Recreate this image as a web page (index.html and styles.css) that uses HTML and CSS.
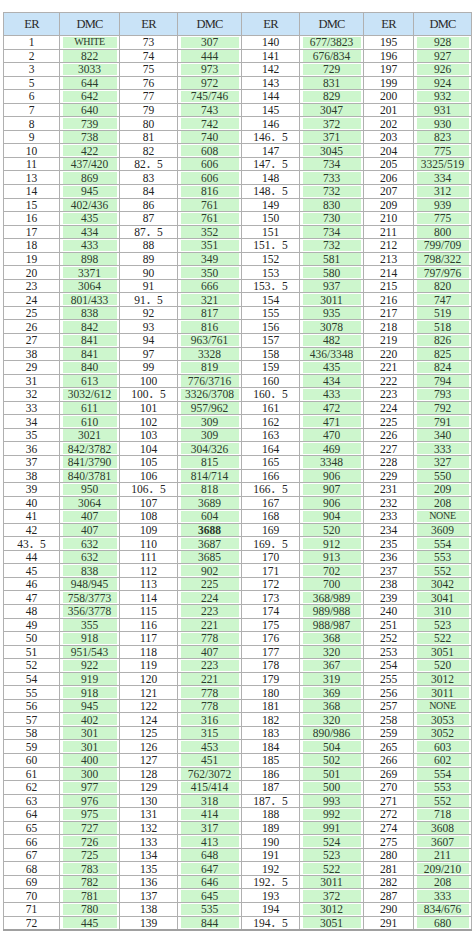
FILE: index.html
```html
<!DOCTYPE html>
<html lang="zh">
<head>
<meta charset="utf-8">
<title>ER DMC</title>
<link rel="stylesheet" href="styles.css">
</head>
<body>
<div class="page">
<table class="chart">
<colgroup>
<col class="ca"><col class="cb"><col class="cc"><col class="cd"><col class="cc"><col class="cd"><col class="ce"><col class="cc">
</colgroup>
<thead>
<tr><th>ER</th><th>DMC</th><th>ER</th><th>DMC</th><th>ER</th><th>DMC</th><th>ER</th><th>DMC</th></tr>
</thead>
<tbody>
<tr><td>1</td><td class="w">WHITE</td><td>73</td><td>307</td><td>140</td><td>677/3823</td><td>195</td><td>928</td></tr>
<tr><td>2</td><td>822</td><td>74</td><td>444</td><td>141</td><td>676/834</td><td>196</td><td>927</td></tr>
<tr><td>3</td><td>3033</td><td>75</td><td>973</td><td>142</td><td>729</td><td>197</td><td>926</td></tr>
<tr><td>5</td><td>644</td><td>76</td><td>972</td><td>143</td><td>831</td><td>199</td><td>924</td></tr>
<tr><td>6</td><td>642</td><td>77</td><td>745/746</td><td>144</td><td>829</td><td>200</td><td>932</td></tr>
<tr><td>7</td><td>640</td><td>79</td><td>743</td><td>145</td><td>3047</td><td>201</td><td>931</td></tr>
<tr><td>8</td><td>739</td><td>80</td><td>742</td><td>146</td><td>372</td><td>202</td><td>930</td></tr>
<tr><td>9</td><td>738</td><td>81</td><td>740</td><td>146．5</td><td>371</td><td>203</td><td>823</td></tr>
<tr><td>10</td><td>422</td><td>82</td><td>608</td><td>147</td><td>3045</td><td>204</td><td>775</td></tr>
<tr><td>11</td><td>437/420</td><td>82．5</td><td>606</td><td>147．5</td><td>734</td><td>205</td><td>3325/519</td></tr>
<tr><td>13</td><td>869</td><td>83</td><td>606</td><td>148</td><td>733</td><td>206</td><td>334</td></tr>
<tr><td>14</td><td>945</td><td>84</td><td>816</td><td>148．5</td><td>732</td><td>207</td><td>312</td></tr>
<tr><td>15</td><td>402/436</td><td>86</td><td>761</td><td>149</td><td>830</td><td>209</td><td>939</td></tr>
<tr><td>16</td><td>435</td><td>87</td><td>761</td><td>150</td><td>730</td><td>210</td><td>775</td></tr>
<tr><td>17</td><td>434</td><td>87．5</td><td>352</td><td>151</td><td>734</td><td>211</td><td>800</td></tr>
<tr><td>18</td><td>433</td><td>88</td><td>351</td><td>151．5</td><td>732</td><td>212</td><td>799/709</td></tr>
<tr><td>19</td><td>898</td><td>89</td><td>349</td><td>152</td><td>581</td><td>213</td><td>798/322</td></tr>
<tr><td>20</td><td>3371</td><td>90</td><td>350</td><td>153</td><td>580</td><td>214</td><td>797/976</td></tr>
<tr><td>23</td><td>3064</td><td>91</td><td>666</td><td>153．5</td><td>937</td><td>215</td><td>820</td></tr>
<tr><td>24</td><td>801/433</td><td>91．5</td><td>321</td><td>154</td><td>3011</td><td>216</td><td>747</td></tr>
<tr><td>25</td><td>838</td><td>92</td><td>817</td><td>155</td><td>935</td><td>217</td><td>519</td></tr>
<tr><td>26</td><td>842</td><td>93</td><td>816</td><td>156</td><td>3078</td><td>218</td><td>518</td></tr>
<tr><td>27</td><td>841</td><td>94</td><td>963/761</td><td>157</td><td>482</td><td>219</td><td>826</td></tr>
<tr><td>38</td><td>841</td><td>97</td><td>3328</td><td>158</td><td>436/3348</td><td>220</td><td>825</td></tr>
<tr><td>29</td><td>840</td><td>99</td><td>819</td><td>159</td><td>435</td><td>221</td><td>824</td></tr>
<tr><td>31</td><td>613</td><td>100</td><td>776/3716</td><td>160</td><td>434</td><td>222</td><td>794</td></tr>
<tr><td>32</td><td>3032/612</td><td>100．5</td><td>3326/3708</td><td>160．5</td><td>433</td><td>223</td><td>793</td></tr>
<tr><td>33</td><td>611</td><td>101</td><td>957/962</td><td>161</td><td>472</td><td>224</td><td>792</td></tr>
<tr><td>34</td><td>610</td><td>102</td><td>309</td><td>162</td><td>471</td><td>225</td><td>791</td></tr>
<tr><td>35</td><td>3021</td><td>103</td><td>309</td><td>163</td><td>470</td><td>226</td><td>340</td></tr>
<tr><td>36</td><td>842/3782</td><td>104</td><td>304/326</td><td>164</td><td>469</td><td>227</td><td>333</td></tr>
<tr><td>37</td><td>841/3790</td><td>105</td><td>815</td><td>165</td><td>3348</td><td>228</td><td>327</td></tr>
<tr><td>38</td><td>840/3781</td><td>106</td><td>814/714</td><td>166</td><td>906</td><td>229</td><td>550</td></tr>
<tr><td>39</td><td>950</td><td>106．5</td><td>818</td><td>166．5</td><td>907</td><td>231</td><td>209</td></tr>
<tr><td>40</td><td>3064</td><td>107</td><td>3689</td><td>167</td><td>906</td><td>232</td><td>208</td></tr>
<tr><td>41</td><td>407</td><td>108</td><td>604</td><td>168</td><td>904</td><td>233</td><td class="w">NONE</td></tr>
<tr><td>42</td><td>407</td><td>109</td><td class="b">3688</td><td>169</td><td>520</td><td>234</td><td>3609</td></tr>
<tr><td>43．5</td><td>632</td><td>110</td><td>3687</td><td>169．5</td><td>912</td><td>235</td><td>554</td></tr>
<tr><td>44</td><td>632</td><td>111</td><td>3685</td><td>170</td><td>913</td><td>236</td><td>553</td></tr>
<tr><td>45</td><td>838</td><td>112</td><td>902</td><td>171</td><td>702</td><td>237</td><td>552</td></tr>
<tr><td>46</td><td>948/945</td><td>113</td><td>225</td><td>172</td><td>700</td><td>238</td><td>3042</td></tr>
<tr><td>47</td><td>758/3773</td><td>114</td><td>224</td><td>173</td><td>368/989</td><td>239</td><td>3041</td></tr>
<tr><td>48</td><td>356/3778</td><td>115</td><td>223</td><td>174</td><td>989/988</td><td>240</td><td>310</td></tr>
<tr><td>49</td><td>355</td><td>116</td><td>221</td><td>175</td><td>988/987</td><td>251</td><td>523</td></tr>
<tr><td>50</td><td>918</td><td>117</td><td>778</td><td>176</td><td>368</td><td>252</td><td>522</td></tr>
<tr><td>51</td><td>951/543</td><td>118</td><td>407</td><td>177</td><td>320</td><td>253</td><td>3051</td></tr>
<tr><td>52</td><td>922</td><td>119</td><td>223</td><td>178</td><td>367</td><td>254</td><td>520</td></tr>
<tr><td>54</td><td>919</td><td>120</td><td>221</td><td>179</td><td>319</td><td>255</td><td>3012</td></tr>
<tr><td>55</td><td>918</td><td>121</td><td>778</td><td>180</td><td>369</td><td>256</td><td>3011</td></tr>
<tr><td>56</td><td>945</td><td>122</td><td>778</td><td>181</td><td>368</td><td>257</td><td class="w">NONE</td></tr>
<tr><td>57</td><td>402</td><td>124</td><td>316</td><td>182</td><td>320</td><td>258</td><td>3053</td></tr>
<tr><td>58</td><td>301</td><td>125</td><td>315</td><td>183</td><td>890/986</td><td>259</td><td>3052</td></tr>
<tr><td>59</td><td>301</td><td>126</td><td>453</td><td>184</td><td>504</td><td>265</td><td>603</td></tr>
<tr><td>60</td><td>400</td><td>127</td><td>451</td><td>185</td><td>502</td><td>266</td><td>602</td></tr>
<tr><td>61</td><td>300</td><td>128</td><td>762/3072</td><td>186</td><td>501</td><td>269</td><td>554</td></tr>
<tr><td>62</td><td>977</td><td>129</td><td>415/414</td><td>187</td><td>500</td><td>270</td><td>553</td></tr>
<tr><td>63</td><td>976</td><td>130</td><td>318</td><td>187．5</td><td>993</td><td>271</td><td>552</td></tr>
<tr><td>64</td><td>975</td><td>131</td><td>414</td><td>188</td><td>992</td><td>272</td><td>718</td></tr>
<tr><td>65</td><td>727</td><td>132</td><td>317</td><td>189</td><td>991</td><td>274</td><td>3608</td></tr>
<tr><td>66</td><td>726</td><td>133</td><td>413</td><td>190</td><td>524</td><td>275</td><td>3607</td></tr>
<tr><td>67</td><td>725</td><td>134</td><td>648</td><td>191</td><td>523</td><td>280</td><td>211</td></tr>
<tr><td>68</td><td>783</td><td>135</td><td>647</td><td>192</td><td>522</td><td>281</td><td>209/210</td></tr>
<tr><td>69</td><td>782</td><td>136</td><td>646</td><td>192．5</td><td>3011</td><td>282</td><td>208</td></tr>
<tr><td>70</td><td>781</td><td>137</td><td>645</td><td>193</td><td>372</td><td>287</td><td>333</td></tr>
<tr><td>71</td><td>780</td><td>138</td><td>535</td><td>194</td><td>3012</td><td>290</td><td>834/676</td></tr>
<tr><td>72</td><td>445</td><td>139</td><td>844</td><td>194．5</td><td>3051</td><td>291</td><td>680</td></tr>
</tbody>
</table>
</div>
</body>
</html>
```
FILE: styles.css
```css
html, body {
  margin: 0;
  padding: 0;
  background: #ffffff;
}

.page {
  padding: 12px 3px 0 3px;
}

.chart {
  border-collapse: collapse;
  table-layout: fixed;
  width: 468px;
  font-family: "Liberation Serif", "Noto Sans CJK SC", serif;
  font-size: 11.5px;
  color: #222222;
}

.ca { width: 56px; }
.cb { width: 60px; }
.cc { width: 58px; }
.cd { width: 64px; }
.ce { width: 50px; }

.chart th,
.chart td {
  border: 1px solid #b0b0b0;
  padding: 0;
  text-align: center;
  vertical-align: middle;
  white-space: nowrap;
  overflow: hidden;
}

.chart thead tr {
  height: 23px;
}

.chart th {
  background: #c9e3f7;
  font-weight: normal;
  font-size: 12.5px;
  letter-spacing: -0.8px;
  color: #2a2a2a;
}

.chart tbody tr {
  height: 13.55px;
}

.chart td {
  line-height: 10px;
}

.chart td:nth-child(2n) {
  background: #cdf6cd;
  background-clip: content-box;
  padding: 1px 3px;
  color: #2c3a2c;
}

.chart tbody tr:last-child td {
  border-bottom: 2px solid #a0a0a0;
}

.chart td.w {
  font-size: 10px;
  letter-spacing: -0.3px;
}

.chart td.b {
  font-weight: bold;
}
```
